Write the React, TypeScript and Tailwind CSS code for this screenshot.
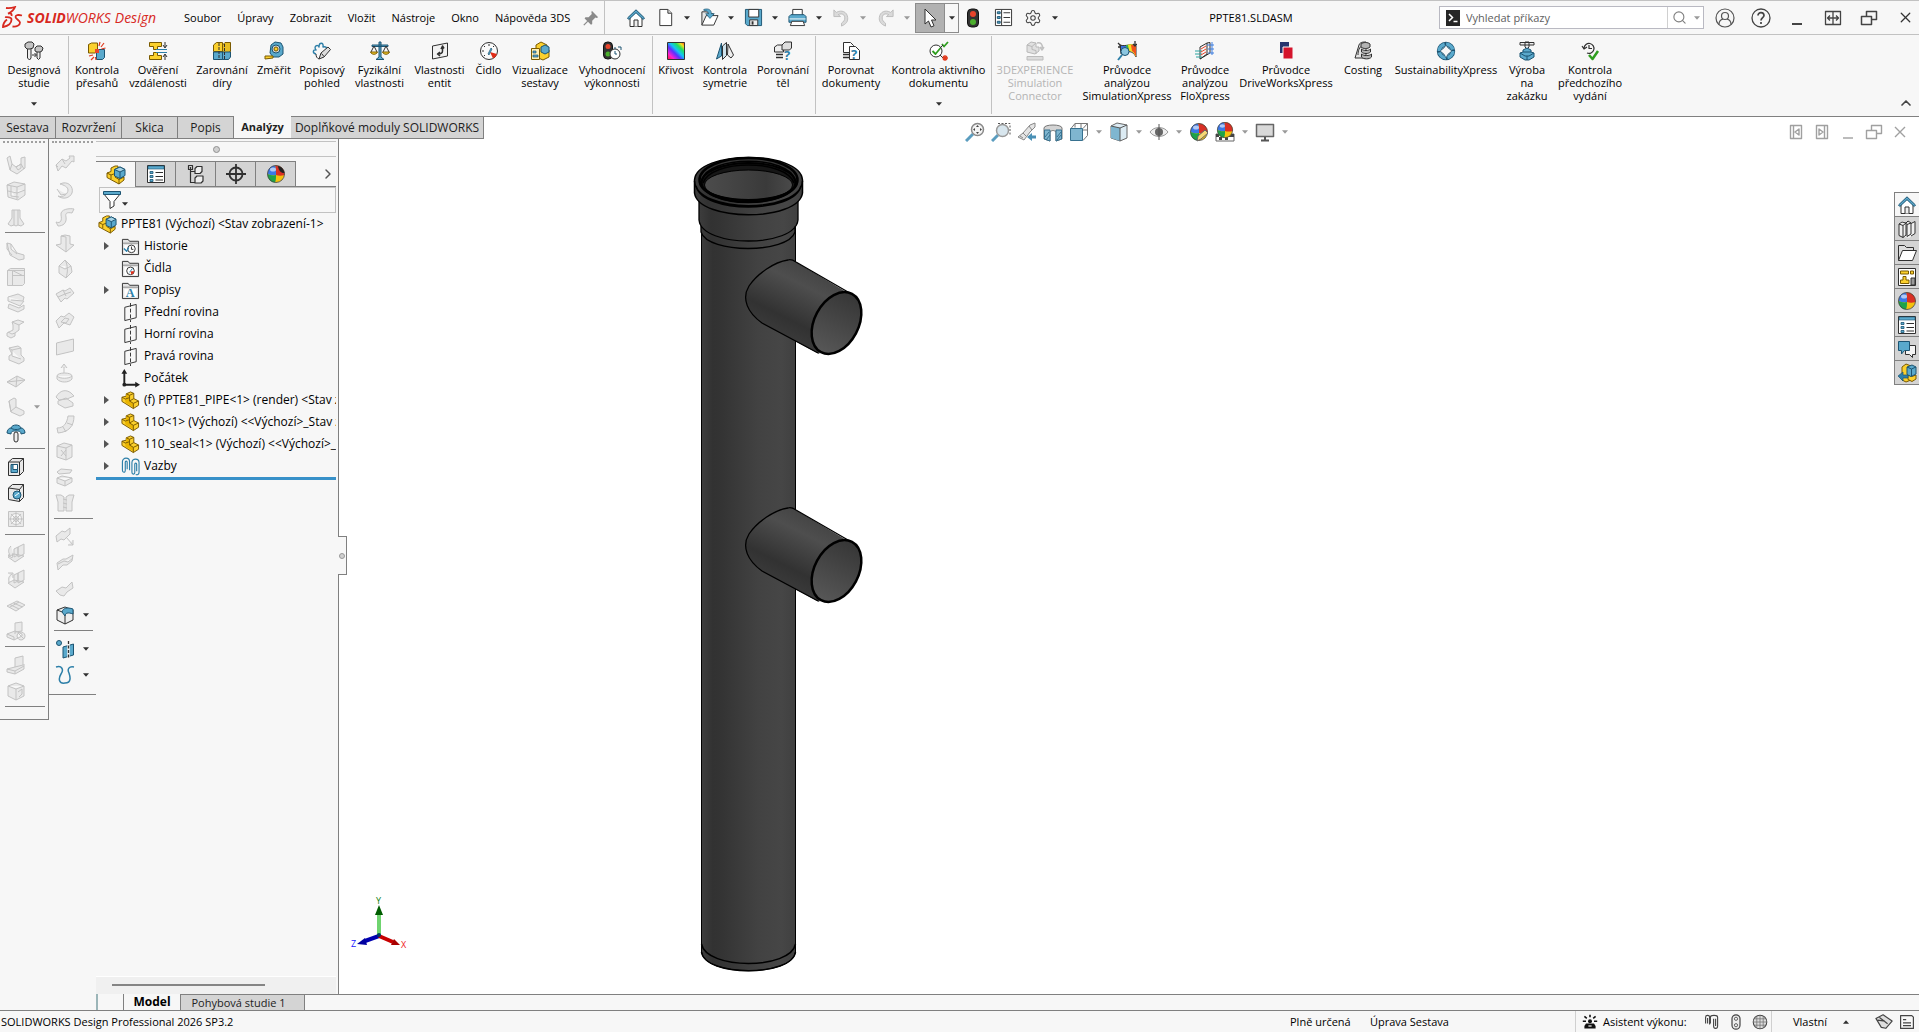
import React from 'react';
import { Search, ChevronRight, ChevronUp, X, Settings } from 'lucide-react';

type IconProps = { children: React.ReactNode; size?: number };

const Icon: React.FC<IconProps> = ({ children, size = 20 }) => (
  <svg width={size} height={size} viewBox="0 0 20 20" fill="none" strokeLinejoin="round" aria-hidden="true">
    {children}
  </svg>
);

const INK = '#303030';
const BLUE = '#5aa9cc';
const NAVY = '#1c5472';
const GOLD = '#fbd02d';
const OCHRE = '#7a5a00';

const Caret: React.FC<{ dim?: boolean; up?: boolean }> = ({ dim, up }) => (
  <svg width="6" height="4" viewBox="0 0 7 4" aria-hidden="true">
    <path d={up ? 'M3.500 0L7 4H0z' : 'M0 0h7L3.500 4z'} fill={dim ? '#9a9a9a' : '#303030'} />
  </svg>
);

/* ---------- shared glyphs ---------- */

const home = (
  <>
    <path d="M4 9v9.500h12V9l-6-5.500z" fill="#fff" stroke={INK} />
    <path d="M8 18.500v-6.500h4v6.500" fill="#eee" stroke={INK} />
    <path d="M1.500 10L10 1.800 18.500 10l-1.300 1.500L10 4.700 2.800 11.500z" fill={BLUE} stroke={NAVY} />
  </>
);

const part = (
  <>
    <path d="M1 6.500l4.500-1V3L10 1l3.500 1.500V8l5 2.500V15L13 18.500 1 11z" fill={GOLD} stroke={OCHRE} />
    <path d="M1 6.500l3.500 2 0 3.500 8.500 5V13L9 10.500V4.500L5.500 3v2.500L4.500 8.500z" fill="#e9b400" />
    <path d="M5.500 3L9 4.500l4.500-2M9 4.500v6l4 2.500 5.500-2.500M13 13v5.500M9 10.500L13.500 8M1 6.500l3.500 2L9 7" stroke={OCHRE} />
  </>
);

const assembly = (
  <>
    <path d="M1 8l4-1.500V3l4-2h3v9l6 2v3l-5 4L1 12.500z" fill={GOLD} stroke={OCHRE} />
    <path d="M1 8l4 2v4M5 10l4-1.500M13 14v5M9 12l4 2.500 5-2.500" stroke={OCHRE} />
    <path d="M8.500 4.500L14 2l5 2.500v6L14 13.500l-5.500-2.500z" fill={BLUE} stroke={NAVY} />
    <path d="M8.500 4.500L14 7l5-2.500L14 2z" fill="#a5d3e6" stroke={NAVY} />
    <path d="M14 7v6.500" stroke={NAVY} />
  </>
);

const propertyList = (
  <>
    <rect x="1.500" y="1.500" width="17" height="17" fill="#fff" stroke={INK} />
    <rect x="2" y="2" width="16" height="3" fill={BLUE} stroke={NAVY} strokeWidth=".6" />
    <path d="M4 7.500h3v2H4zM4 11.500h3v2H4zM4 15.500h3v2H4z" fill={BLUE} stroke={NAVY} strokeWidth=".8" />
    <path d="M9.500 8.500H17M9.500 12.500H17M9.500 16H17" stroke={INK} />
  </>
);

const appearance = (
  <>
    <circle cx="10" cy="10" r="8.500" fill="#f4c20d" />
    <path d="M10 11c0-4 0-7-1-9.500 6-.5 10 4 9.500 9.500-3 1-6 1-8.500 0z" fill="#d93025" />
    <path d="M10 11c-3 1-6 0-8.500-1C1.500 5 5 1.500 9 1.500 10 4 10 7 10 11z" fill="#3b78e7" />
    <path d="M10 11c0 3 0 5-1 7.500C5 18.500 1.500 15 1.500 10c2.500 1 5.500 2 8.500 1z" fill="#1ea34a" />
    <circle cx="10" cy="10" r="8.500" stroke="#444" strokeWidth=".8" />
    <ellipse cx="7" cy="5.500" rx="3" ry="2" fill="#fff" opacity=".6" />
  </>
);

const question = (x: number, y: number) => (
  <text x={x} y={y} fontFamily="Open Sans, sans-serif" fontSize="13" fontWeight="700" fill="#2d7fa8">?</text>
);

/* ---------- title bar ---------- */

const menus = ['Soubor', 'Úpravy', 'Zobrazit', 'Vložit', 'Nástroje', 'Okno', 'Nápověda 3DS'];

const quickTools = [
  {
    label: 'Nový',
    art: (
      <>
        <path d="M4 1.500h8.500l4 4v13H4z" fill="#fff" stroke={INK} />
        <path d="M12.500 1.500v4h4" fill="#ddd" stroke={INK} />
      </>
    ),
  },
  {
    label: 'Otevřít',
    art: (
      <>
        <path d="M2 18V4h5l1.500 2H14v3" fill="#e6e6e6" stroke={INK} />
        <path d="M2 18l4.500-10H19l-4.500 10z" fill="#fff" stroke={INK} />
        <path d="M4 1.500c5-1.500 8 .5 8 4.500h3l-4.500 5L6 6h3c0-2-1.500-3.500-5-3.500z" fill={BLUE} stroke={NAVY} strokeWidth=".7" />
      </>
    ),
  },
  {
    label: 'Uložit',
    art: (
      <>
        <path d="M1.500 1.500h17v17h-15l-2-2z" fill={BLUE} stroke={NAVY} />
        <path d="M5 1.500h10.500v8H5z" fill="#fff" stroke={INK} />
        <path d="M6 12.500h8.500v6H6z" fill="#eee" stroke={INK} />
        <path d="M8 14h2v3.500H8z" fill={INK} />
      </>
    ),
  },
  {
    label: 'Tisk',
    art: (
      <>
        <path d="M5 8V1.500h10V8" fill="#fff" stroke={INK} />
        <path d="M1 9l2-2h14l2 2v6H1z" fill={BLUE} stroke={NAVY} />
        <path d="M1.500 11.500h17" stroke="#fff" />
        <path d="M4 14h12l1.500 4.500h-15z" fill="#fff" stroke={INK} />
      </>
    ),
  },
  { label: 'Zpět', dim: true, art: <path d="M2 2v7h7L6.500 7c4-2 7 0 7 3.500 0 2.500-1.500 4-3.500 5.500v3c5-2 7-5 6.500-9C16 4 10 1.500 4.500 4.700z" fill="#dadada" stroke="#bdbdbd" /> },
  { label: 'Znovu', dim: true, art: <path d="M18 2v7h-7l2.500-2c-4-2-7 0-7 3.500 0 2.500 1.500 4 3.500 5.500v3c-5-2-7-5-6.500-9C4 4 10 1.500 15.500 4.700z" fill="#dadada" stroke="#bdbdbd" /> },
];

const TitleBar: React.FC = () => (
  <header className="flex h-[35px] shrink-0 items-center border-b border-t border-[#c2c2c2]">
    <div className="flex w-44 shrink-0 items-center pl-[2px] text-[#d8291f]">
      <svg width="21" height="24" viewBox="0 0 21 24" fill="none" stroke="#d8291f" strokeWidth="1.800" aria-hidden="true">
        <path d="M4 2c2 .3 5 .3 9-1-1 3-3.500 5-7 6.500 3-.5 4 .5 3.500 2.500" />
        <path d="M3 11c2 .5 6.500-.5 6.500 2.500 0 4-3.500 6.500-8.500 7.500 0-2.500 1.500-5.500 4-7.500" />
        <path d="M20 9.500c-4-1-6.500-.5-6.500 1.500s4.500 3.500 4.500 5.500c0 3-3.500 4.500-7.500 4" />
      </svg>
      <span className="pl-1 text-sm italic leading-5"><b>SOLID</b>WORKS</span>
      <span className="pl-1 text-sm italic leading-5">Design</span>
    </div>
    <nav className="flex w-[402px] shrink-0">
      {menus.map((m) => (
        <button key={m} className="whitespace-nowrap px-2">{m}</button>
      ))}
    </nav>
    <button aria-label="Připnout" className="flex h-full w-[27px] shrink-0 items-center justify-center border-r border-[#c2c2c2]">
      <Icon size={16}>
        <path d="M11 1l8 8-2 1-1.500-.5-4 4 0 4-1.500 1L2 10.500 3 9h4l4-4-.5-2z" fill="#8a8a8a" />
        <path d="M6 14l-5 5" stroke="#8a8a8a" strokeWidth="1.500" />
      </Icon>
    </button>
    <div className="flex h-full shrink-0 items-center pl-4">
      <button aria-label="Domů" className="flex w-[30px] justify-center"><Icon>{home}</Icon></button>
      {quickTools.map((t) => (
        <div key={t.label} className="flex items-center">
          <button aria-label={t.label} className="flex w-7 justify-center"><Icon size={19}>{t.art}</Icon></button>
          <button aria-label={`${t.label} – možnosti`} className="flex w-4 justify-center"><Caret dim={t.dim} /></button>
        </div>
      ))}
      <div className="flex h-[30px] border border-[#8c8c8c]">
        <button aria-label="Vybrat" className="flex w-[29px] items-center justify-center border-r border-[#8c8c8c] bg-[#b1b1b1]">
          <Icon>
            <path d="M5 1v15l3.500-3 2.500 6 3-1.200-2.500-5.800H16z" fill="#fff" stroke={INK} />
          </Icon>
        </button>
        <button aria-label="Vybrat – možnosti" className="flex w-[13px] items-center justify-center"><Caret /></button>
      </div>
      <button aria-label="Přestavět" className="flex w-7 justify-center">
        <Icon>
          <rect x="4.500" y="1" width="11" height="18" rx="4" fill="#333" stroke="#111" />
          <circle cx="10" cy="6" r="3" fill="#e8452c" />
          <circle cx="10" cy="14" r="3" fill="#4caf2d" />
        </Icon>
      </button>
      <button aria-label="Vlastnosti souboru" className="flex w-8 justify-center">
        <Icon size={19}>
          <rect x="1.500" y="1.500" width="17" height="17" fill="#fff" stroke={INK} />
          <path d="M8 2v16" stroke={INK} />
          <path d="M3.500 4h3v2h-3zM3.500 9h3v2h-3zM3.500 14h3v2h-3z" fill={BLUE} stroke={NAVY} />
          <path d="M10 5h7M10 10h7M10 15h7" stroke={INK} />
        </Icon>
      </button>
      <button aria-label="Možnosti" className="flex w-7 justify-center"><Settings size={18} strokeWidth={1.400} color="#444" /></button>
      <button aria-label="Možnosti – nabídka" className="flex w-4 justify-center"><Caret /></button>
    </div>
    <h1 className="flex-1 text-center">PPTE81.SLDASM</h1>
    <div className="flex h-[23px] w-[265px] shrink-0 items-center border border-[#b9b9c2] bg-white">
      <span className="ml-[6px] flex h-4 w-[14px] items-center justify-center bg-[#262626]">
        <svg width="10" height="10" viewBox="0 0 10 10" fill="none" stroke="#fff" strokeWidth="1.500" aria-hidden="true">
          <path d="M1 1l3.500 3.500L1 8M5.500 8.500h4" />
        </svg>
      </span>
      <input
        aria-label="Vyhledat příkazy"
        placeholder="Vyhledat příkazy"
        className="h-full min-w-0 flex-1 px-[6px] outline-none placeholder:text-[#606060]"
      />
      <button aria-label="Hledat" className="flex h-full w-[23px] items-center justify-center border-l border-[#d0d0d0]">
        <Search size={15} strokeWidth={1.800} color="#808080" />
      </button>
      <button aria-label="Rozsah hledání" className="flex w-[13px] justify-center"><Caret dim /></button>
    </div>
    <div className="ml-[3px] flex shrink-0 items-center">
      <button aria-label="Přihlášení" className="flex w-9 justify-center">
        <Icon>
          <circle cx="10" cy="10" r="9" stroke="#555" strokeWidth="1.200" />
          <circle cx="10" cy="8" r="3.500" stroke="#555" strokeWidth="1.200" />
          <path d="M4 16.500c0-3.500 2-5 4-5.500M16 16.500c0-3.500-2-5-4-5.500" stroke="#555" strokeWidth="1.200" />
        </Icon>
      </button>
      <button aria-label="Nápověda" className="flex w-9 justify-center">
        <Icon>
          <circle cx="10" cy="10" r="9" stroke="#444" strokeWidth="1.300" />
          <path d="M7 7.500C7 3.500 13 3.800 13 7.500c0 2-3 2.500-3 5M10 14v2" stroke="#444" strokeWidth="1.700" />
        </Icon>
      </button>
      <button aria-label="Minimalizovat" className="flex w-9 justify-center">
        <Icon><path d="M5 16h10" stroke="#444" strokeWidth="2" /></Icon>
      </button>
      <button aria-label="Rozdělit" className="flex w-9 justify-center">
        <Icon><path d="M2.500 3.500h15v13h-15zM10 3.500v13M4.500 10h11M7 7.500L4.500 10 7 12.500M13 7.500l2.500 2.500-2.500 2.500" stroke="#444" strokeWidth="1.300" /></Icon>
      </button>
      <button aria-label="Obnovit" className="flex w-9 justify-center">
        <Icon><path d="M2.500 8.500h10v8h-10zM7.500 8.500v-5h10v8h-5" stroke="#444" strokeWidth="1.500" /></Icon>
      </button>
      <button aria-label="Zavřít" className="flex w-8 justify-center pl-1"><X size={17} strokeWidth={1.800} color="#333" /></button>
    </div>
  </header>
);

/* ---------- ribbon ---------- */

type Tool = { lines: string[]; w: string; art: React.ReactNode; menu?: boolean; sep?: boolean; off?: boolean };

const ribbon: Tool[] = [
  {
    lines: ['Designová', 'studie'], w: 'w-[69px]', menu: true, sep: true,
    art: (
      <>
        <path d="M3.500 8v9l2 2 1.500-2V8M13 11v6l1.500 1.500 1.500-1.500v-6" fill="#eee" stroke={INK} />
        <path d="M1 3l3-2h4l2 2-1 4-3 1H3L1 6zM11 7l2-2h4l2 2-1 3-2 1h-3l-2-1z" fill="#c4c4c4" stroke={INK} />
        <path d="M8 14h4M10.500 12l2 2-2 2" stroke={INK} />
      </>
    ),
  },
  {
    lines: ['Kontrola', 'přesahů'], w: 'w-[56px]',
    art: (
      <>
        <path d="M1.500 3.500l3-1.500h6v8l-2 2h-7z" fill={GOLD} stroke={OCHRE} />
        <path d="M9.500 10.500l2-2h6v8l-2 2h-6z" fill={BLUE} stroke={NAVY} />
        <path d="M8 8h4v4H8z" fill="#e8452c" />
        <path d="M12 5l1-4M14 6l3-4M14.500 8l4-1M6 14l-4 1M7 16l-3 3M9 19l-.5-3" stroke="#e03a1e" strokeWidth="1.200" />
      </>
    ),
  },
  {
    lines: ['Ověření', 'vzdálenosti'], w: 'w-[66px]',
    art: (
      <>
        <path d="M1.500 1.500h12v4h-4v3h-4v-3h-4zM1.500 18.500h12v-4h-4v-3h-4v3h-4z" fill={GOLD} stroke={OCHRE} />
        <path d="M8 8.500h11M8 11.500h11" stroke="#2d7fa8" />
        <path d="M17 1v5M17 19v-5M15 4l2 3 2-3M15 16l2-3 2 3" stroke={INK} />
      </>
    ),
  },
  {
    lines: ['Zarovnání', 'díry'], w: 'w-[62px]',
    art: (
      <>
        <path d="M1.500 4l3-2.500h6v9h-9z" fill={GOLD} stroke={OCHRE} />
        <path d="M10.500 4l2.500-2.500h5.500v9l-2 1h-6z" fill="#e8bd20" stroke={OCHRE} />
        <path d="M1.500 11h9v7.500h-9zM10.500 11h8v5l-2 2.500h-6z" fill={BLUE} stroke={NAVY} />
        <path d="M7 2v17M12.500 3v15" stroke={INK} strokeDasharray="3 1" />
      </>
    ),
  },
  {
    lines: ['Změřit'], w: 'w-[42px]',
    art: (
      <>
        <path d="M7 4l4-3 6 1 2 4v7l-4 3H9L6 12z" fill={BLUE} stroke={NAVY} />
        <circle cx="12" cy="8" r="4" fill="#d6d6d6" stroke={NAVY} />
        <circle cx="12" cy="8" r="2" fill={GOLD} stroke={OCHRE} />
        <path d="M1 18v-3h8v2z" fill={GOLD} stroke={OCHRE} />
      </>
    ),
  },
  {
    lines: ['Popisový', 'pohled'], w: 'w-[54px]',
    art: (
      <>
        <path d="M4 13c-4-1-3-5 0-4-3-4 2-6 3-3 0-5 5-5 4 0 4-1 5 2 2 4" stroke="#2d7fa8" strokeWidth="1.400" />
        <path d="M7 18l2-6 7-6 2.500 2.500L12 16z" fill="#ddd" stroke={INK} />
        <path d="M9.500 12.500l2.500 3M4 13c0 3 1 4 3 5" stroke={INK} />
      </>
    ),
  },
  {
    lines: ['Fyzikální', 'vlastnosti'], w: 'w-[61px]',
    art: (
      <>
        <path d="M9 1h2v15l3 2.500H6L9 16zM2 4h16v1.500H2z" fill={BLUE} stroke={NAVY} />
        <path d="M4 5L1 11M4 5l3 6M16 5l-3 6M16 5l3 6" stroke={INK} />
        <path d="M.5 11h7c-1 3-6 3-7 0zM12.500 11h7c-1 3-6 3-7 0z" fill={GOLD} stroke={OCHRE} />
      </>
    ),
  },
  {
    lines: ['Vlastnosti', 'entit'], w: 'w-[59px]',
    art: (
      <>
        <path d="M2.500 5l15-3v13l-15 3z" fill="#f2f2f2" stroke={INK} />
        <path d="M12.500 6v4c0 2-2 3-4.500 3M14 7.500L12.500 5 11 8M10 11l-2.500 2 2.500 2" stroke={INK} strokeWidth="1.500" />
      </>
    ),
  },
  {
    lines: ['Čidlo'], w: 'w-[39px]',
    art: (
      <>
        <circle cx="10" cy="10" r="8.500" fill="#fafafa" stroke={INK} />
        <path d="M10 3v2M5 5l1 1M3 10h2M5 15l1-1M15 5l-1 1" stroke={INK} />
        <path d="M11 11l7 2a8 8 0 0 1-4 4.500z" fill="#e02b16" />
        <path d="M9 13l3-6 1 1-3 6z" fill={BLUE} stroke={NAVY} strokeWidth=".7" />
      </>
    ),
  },
  {
    lines: ['Vizualizace', 'sestavy'], w: 'w-[64px]',
    art: (
      <>
        <path d="M6 4l5-3 6 3v4l2 1v7l-6 3-7-3z" fill={GOLD} stroke={OCHRE} />
        <path d="M11 6l4-2 4 2v5l-4 2-4-2z" fill={BLUE} stroke={NAVY} />
        <path d="M1.500 7.500h8v11h-8z" fill="#fff2b8" stroke={OCHRE} />
        <path d="M3 10h3v2H3zM3 14h5v2H3z" fill={BLUE} stroke={NAVY} strokeWidth=".7" />
      </>
    ),
  },
  {
    lines: ['Vyhodnocení', 'výkonnosti'], w: 'w-[81px]', sep: true,
    art: (
      <>
        <rect x="1.500" y="1" width="9" height="17" rx="4" fill="#333" stroke="#111" />
        <circle cx="6" cy="5.500" r="2.500" fill="#e8452c" />
        <circle cx="6" cy="13" r="2.500" fill="#4caf2d" />
        <circle cx="13" cy="13" r="5" fill="#fff" stroke={INK} />
        <path d="M13 10v3h2M12 7h2M16 6h3v3" stroke={NAVY} />
      </>
    ),
  },
  {
    lines: ['Křivost'], w: 'w-[46px]',
    art: (
      <>
        <rect x="1.500" y="1.500" width="17" height="17" fill="url(#curvature)" stroke={INK} />
        <defs>
          <linearGradient id="curvature" x1="0" y1="1" x2="1" y2="0">
            <stop offset="0" stopColor="#ff1e2a" />
            <stop offset=".2" stopColor="#ff20d0" />
            <stop offset=".4" stopColor="#5a30ff" />
            <stop offset=".55" stopColor="#12c4f8" />
            <stop offset=".72" stopColor="#20e060" />
            <stop offset=".86" stopColor="#f6e020" />
            <stop offset="1" stopColor="#ff3020" />
          </linearGradient>
        </defs>
      </>
    ),
  },
  {
    lines: ['Kontrola', 'symetrie'], w: 'w-[52px]',
    art: (
      <>
        <path d="M1.500 18l5-16v13z" fill={BLUE} stroke={NAVY} />
        <path d="M7.500 5l4-3.500v13l-4 4z" fill="#cfe4ee" stroke={INK} />
        <path d="M13 3l5.500 11-2.500 3-3.500-3z" fill="#eee" stroke={INK} />
      </>
    ),
  },
  {
    lines: ['Porovnání', 'těl'], w: 'w-[65px]', sep: true,
    art: (
      <>
        <path d="M1.500 6l3-2h6v7h-9z" fill="#eee" stroke={INK} />
        <path d="M9 4l3-3h6.500v6l-2 2H9z" fill="#ddd" stroke={INK} />
        <path d="M3 13.500h7M3 16.500h7" stroke={INK} strokeWidth="1.500" />
        {question(11, 19)}
      </>
    ),
  },
  {
    lines: ['Porovnat', 'dokumenty'], w: 'w-[70px]',
    art: (
      <>
        <path d="M2.500 1.500h7l3 3v7h-10z" fill="#fff" stroke={INK} />
        <path d="M8.500 5.500h6l4 4v9h-10z" fill="#fff" stroke={INK} />
        <path d="M2 13.500h6M2 16.500h6" stroke={INK} strokeWidth="1.500" />
        {question(10, 18)}
      </>
    ),
  },
  {
    lines: ['Kontrola aktivního', 'dokumentu'], w: 'w-[106px]', menu: true, sep: true,
    art: (
      <>
        <circle cx="7" cy="10" r="6" fill="#fff" stroke={INK} />
        <path d="M3.500 10l3 3 5-6M13 3l2 2.500L19 1" stroke="#2f9e1f" strokeWidth="1.800" />
        <path d="M11 7l3-3M11 14l3 3" stroke={INK} />
        <path d="M14 15l4 4M18 15l-4 4M16 14v6M13.500 17H19" stroke="#e03a1e" strokeWidth="1.300" />
      </>
    ),
  },
  {
    lines: ['3DEXPERIENCE', 'Simulation', 'Connector'], w: 'w-[86px]', off: true,
    art: (
      <>
        <path d="M2 4l4-3 5 1v4h3v4l-4 3-8-2zM2 4l5 1.500v3l4 1V13M7 5.500l4-3.500" fill="#e0e0e0" stroke="#b8b8b8" />
        <path d="M12 2c4-1 6 2 5 5M15 6l2 3 2-3" stroke="#c0c0c0" strokeWidth="1.500" />
        <path d="M2 15.500h16v3.500H2z" fill="#dcdcdc" stroke="#bcbcbc" />
      </>
    ),
  },
  {
    lines: ['Průvodce', 'analýzou', 'SimulationXpress'], w: 'w-[98px]',
    art: (
      <>
        <path d="M3 4c6 2 10-2 16 1v11c-2-4-5-6-8-5l-7 2z" fill="#3b6fe0" stroke={INK} />
        <path d="M10 4c3-1 6-1 9 1v11c-2-4-4-6-7-6z" fill="#f6e020" />
        <path d="M14 4c2 0 4 0 5 1v11c-1-3-2-5-4-6z" fill="#f0521c" />
        <path d="M9 4l2 0 1 5-2 0z" fill="#36b24a" />
        <circle cx="8" cy="10.500" r="4" fill="#8cc6e0" stroke={NAVY} />
        <path d="M5 14l-4 5" stroke="#2d7fa8" strokeWidth="2" />
        <path d="M1 2l3 3M1 6h3M18 0v4M16 3l2 2 2-2" stroke={INK} strokeWidth="1.300" />
      </>
    ),
  },
  {
    lines: ['Průvodce', 'analýzou', 'FloXpress'], w: 'w-[58px]',
    art: (
      <>
        <path d="M5 6l7-4v11l-7 5z" fill="#f4f4f4" stroke={INK} />
        <path d="M12 2l3-.5v10.500L5 18" stroke={INK} />
        <path d="M0 10h7M0 13h7M1 16h6" stroke="#2aa3a0" />
        <path d="M12 4h7M13 8h6M13 12h6M17 1v13" stroke="#3f7fe0" />
        <path d="M6 8l5-3M6 11l5-3M6 14l5-3" stroke="#e8452c" />
      </>
    ),
  },
  {
    lines: ['Průvodce', 'DriveWorksXpress'], w: 'w-[104px]',
    art: (
      <>
        <path d="M4 1h9v11H4z" fill="#27346e" />
        <path d="M7 6h10v12H7z" fill="#d4142c" stroke="#f7f7f7" />
      </>
    ),
  },
  {
    lines: ['Costing'], w: 'w-[50px]',
    art: (
      <>
        <path d="M2 17L6 4c1-3 4-3 7-3v16z" fill="#e4e4e4" stroke={INK} />
        <path d="M5 14c0-4 1-8 5-10" stroke={INK} />
        <path d="M8 3c2-2 7-2 9 0v3c-2 2-7 2-9 0zM8.500 8c2 2 7 2 9 0v3c-2 2-7 2-9 0zM8.500 13c2 2 8 2 10 0v3c-2 2.500-8 2.500-10 0z" fill="#b4b4b4" stroke={INK} />
      </>
    ),
  },
  {
    lines: ['SustainabilityXpress'], w: 'w-[116px]',
    art: (
      <>
        <circle cx="10" cy="10" r="6.700" stroke={NAVY} strokeWidth="5" />
        <circle cx="10" cy="10" r="6.700" stroke={BLUE} strokeWidth="3.500" strokeDasharray="9 1.500" />
        <path d="M10 4l2 3 4 3-4 3-2 4-2-4-4-3 4-3z" fill="#f7f7f7" stroke={NAVY} strokeWidth=".7" />
      </>
    ),
  },
  {
    lines: ['Výroba', 'na', 'zakázku'], w: 'w-[46px]',
    art: (
      <>
        <path d="M3 1.500h14v2.500H3zM8 1h4v5l-2 2-2-2z" fill="#eee" stroke={INK} />
        <path d="M6 9l4-2 4 2v3H6z" fill={BLUE} stroke={NAVY} />
        <path d="M3 12l3-1h8l3 1v4l-5 3H8l-5-3z" fill={BLUE} stroke={NAVY} />
        <path d="M3 12l5 3h4l5-3M10 15v4" stroke={NAVY} />
      </>
    ),
  },
  {
    lines: ['Kontrola', 'předchozího', 'vydání'], w: 'w-[80px]',
    art: (
      <>
        <path d="M4 7a5 5 0 1 1 3 5M2 5l2 3 3-2M9 4v3.500h3" stroke={INK} strokeWidth="1.200" />
        <path d="M9 14l3.500 4L18 10" stroke="#2f9e1f" strokeWidth="2.500" />
      </>
    ),
  },
];

const Ribbon: React.FC = () => (
  <section className="flex h-[82px] shrink-0 items-stretch border-b border-[#808080] pb-[2px] pt-[1px]">
    {ribbon.map((t) => (
      <button
        key={t.lines.join(' ')}
        disabled={t.off}
        className={`${t.w} flex shrink-0 flex-col items-center pt-[5px] leading-[13px] ${t.sep ? 'border-r border-[#c2c2c2]' : ''} ${t.off ? 'text-[#b4b4b4]' : ''}`}
      >
        <Icon>{t.art}</Icon>
        <span className="mt-[2px] whitespace-pre text-center">{t.lines.join('\n')}</span>
        {t.menu && <span className="mb-2 mt-auto"><Caret /></span>}
      </button>
    ))}
    <button aria-label="Sbalit" className="ml-auto flex items-end pb-[3px] pr-[5px]"><ChevronUp size={16} strokeWidth={2.500} color="#444" /></button>
  </section>
);

const commandTabs = [
  { label: 'Sestava', w: 'w-[56px]' },
  { label: 'Rozvržení', w: 'w-[66px]' },
  { label: 'Skica', w: 'w-[56px]' },
  { label: 'Popis', w: 'w-[56px]' },
  { label: 'Analýzy', w: 'w-[57px]', active: true },
  { label: 'Doplňkové moduly SOLIDWORKS', w: 'w-[193px]' },
];

const CommandTabs: React.FC = () => (
  <div className="-mt-px flex h-[23px] shrink-0 text-xs">
    {commandTabs.map((t) => (
      <button
        key={t.label}
        className={`${t.w} shrink-0 whitespace-nowrap border-b border-[#808080] text-[#222] ${
          t.active ? 'bg-[#f7f7f7] text-[11px] font-bold' : 'border-r border-t bg-[#d4d4d4]'
        }`}
      >
        {t.label}
      </button>
    ))}
    <div className="mt-px flex-1 bg-white" />
  </div>
);

/* ---------- feature toolbars ---------- */

const ghost = (d: string) => <path d={d} fill="#e9e9e9" stroke="#c3c3c3" />;

type Feature = { name: string; art: React.ReactNode; menu?: 'on' | 'dim' } | 'sep';

const g = (name: string, d: string, menu?: 'on' | 'dim'): Feature => ({ name, art: ghost(d), menu });

const sheetMetal: Feature[] = [
  g('Převést na plech', 'M1 3l3-2 2 8 4 3 5-3V3l4-1v11l-8 6-7-4zM6 9l-2 6M15 9l3 5M10 12l5-3 0 4-3 2z'),
  g('Skořepina plechu', 'M1 4l7-3 11 2v11l-7 5-10-3zM1 4l10 2v12M2 10l9 2 8-3M11 6l8-3M5 5v10l8 1'),
  g('Přechodový ohyb', 'M6 3h8v8l4 6-3 2-3-1-2 1-2-1-3 1-3-2 4-6zM8 3v15M12 3v15'),
  'sep',
  g('Lem hrany', 'M1 2l4 1 6 9 7 2v4l-5 1-9-5zM1 2v6l5 6M5 3v5l6 5'),
  g('Plech', 'M1.500 3.500l3-2h14v15l-2 2h-15zM1.500 3.500h5v15M6.500 8.500h12M6.500 3.500l12 0M6.500 3.500l10 5'),
  g('Lem', 'M2 4l10-3 6 3-1 4-12-1M2 4v4l12 5 4-5M3 11l10 4 5-3v4l-6 3-10-4z'),
  g('Jog', 'M6 3l6-2 6 2-5 3v5l-4 3v3l-4 2-4-2v-3l6-3V6zM6 3l7 3M2 13l4 2 3-1'),
  g('Skicovaný ohyb', 'M3 3l9-2 3 2v7l3 3v3l-5 3-10-4v-4l3-2zM3 3l3 2v6l9 3M6 5l9-2'),
  g('Křížový zlom', 'M1 11l10-6 8 4-9 7zM1 11l18-2M11 5l-1 11'),
  g('Roh', 'M3 4l5-3 2 1v8l8 4v3l-4 2-9-4zM3 4l2 11M5 14l5-4', 'dim'),
  {
    name: 'Tvářecí nástroj',
    art: (
      <>
        <path d="M1 10c0-3 2-5 4-5 1-4 9-4 10 0 2 0 4 2 4 5l-4 1c0-3-2-3-5-3s-5 0-5 3z" fill={BLUE} stroke={NAVY} />
        <path d="M5 5c2 2 8 2 10 0" stroke={NAVY} />
        <rect x="8" y="9" width="4" height="10" rx="2" fill="#eee" stroke={INK} />
      </>
    ),
  },
  'sep',
  {
    name: 'Vyříznout',
    art: (
      <>
        <path d="M2.500 5l4-3.500h11v13l-4 4h-11z" fill="#e8e8e8" stroke={INK} />
        <path d="M2.500 5h11v13M13.500 5l4-3.500" stroke={INK} />
        <path d="M5 7.500h6.500v8H5z" fill={BLUE} stroke={NAVY} />
        <path d="M7 7.500h4.500v5H7z" fill="#fff" stroke={NAVY} />
      </>
    ),
  },
  {
    name: 'Jednoduchá díra',
    art: (
      <>
        <path d="M2.500 5l4-3.500h11v13l-4 4-11-2z" fill="#e8e8e8" stroke={INK} />
        <path d="M2.500 5l11 1.500v12M13.500 6.500l4-5" stroke={INK} />
        <circle cx="11" cy="12" r="4" fill={BLUE} stroke={NAVY} />
        <path d="M9 13l4-3" stroke="#fff" />
      </>
    ),
  },
  g('Větrání', 'M2.500 2.500h15v15h-15zM10 2.500v15M2.500 10h15M10 4.500a5.500 5.500 0 1 0 .1 0M10 7.500a2.500 2.500 0 1 0 .1 0M5 5l10 10M15 5L5 15'),
  'sep',
  g('Rozvinout', 'M8 6l4-2v8l-4 2zM12 4l6-3v10l-6 3zM2 14l6-3 10 2-9 6zM5 3c-3 3-3 6-1 9l-2 0 4 3 1-5'),
  g('Svinout', 'M8 6l4-2v8l-4 2zM12 4l6-3v10l-6 3zM2 14l6-3 10 2-9 6zM2 4h5v5M6 5c-3 2-4 4-3 8'),
  g('Rozložit', 'M1 11l10-5 8 4-9 6zM4 9.500l9 4.500M7.500 8l9 4M13 7l-9 5'),
  g('Bez ohybů', 'M9 2l7-1v9l-7 1zM1 13l8-3 7 3v2l-8 4-7-3zM1 13l7 3v3M9 11v2M15 11a4 4 0 1 0 .1 0M12 12l6 6'),
  'sep',
  g('Záložka a drážka', 'M9 3l8-2v9l-8 2zM9 12l-8 2v3l8 2 9-5v-5M1 14l8 2 9-5M9 16v3'),
  g('Převést', 'M2 5l8-3 8 3v10l-8 4-8-4zM2 5l8 3 8-3M10 8v11M12 11l4-3v5l-3 3'),
  'sep',
];

const surfaces: Feature[] = [
  g('Vysunutý povrch', 'M1 10l6-6 4 2 4-3-1-2h5v6l-2-1-6 7-4-2-4 5zM1 10l2 2M7 4l3 5'),
  g('Rotovaný povrch', 'M5 3c8-4 14 3 12 9-2 5-9 7-14 3 5 2 10-2 10-6 0-3-4-5-8-6zM2 8l4 6 5-1'),
  g('Tažený povrch', 'M1 15c5 2 6-2 5-7-1-6 9-7 13-6l-2 4c-5-1-7 0-6 4 1 6-3 9-8 9z'),
  g('Spojený povrch', 'M6 3l4-1 5 1v8l4 1-8 7-10-7 5-1zM6 3l5 1v15'),
  g('Hraniční povrch', 'M10 1l6 6 1 6-6 6-7-5 0-7zM10 1c3 5 3 12 1 18M4 7l6 3 6-3'),
  g('Vyplněný povrch', 'M1 9l7-4 2 1 5-3 4 5-7 6-2-1-4 4zM8 5l3 6M3 12l7-3 6-2'),
  g('Volný tvar', 'M1 10l5-5 3 1 5-4 5 4-4 8-6-2-5 5zM6 11l4-4 4 1-3 4z'),
  g('Rovinný povrch', 'M1.500 6l17-4v12l-17 4z'),
  g('Offset', 'M2 13c0-4 15-4 15 0v3c-3 4-12 4-15 0zM2 13c3 3 12 3 15 0M9 10V4M6 5l3-4 3 4'),
  g('Pravítkový povrch', 'M1 8c4-7 10-8 15-4l3 3-7 3-8 1zM3 12l8-3 7 5v3l-8 2-7-4z'),
  g('Rozšířit', 'M13 1h6c0 10-5 16-16 17l-1-5c7 0 10-5 11-12zM12 8l6 2M8 12l3 5'),
  g('Smazat plochu', 'M2 5l7-3 8 2v12l-6 3-9-3zM2 5l9 2v12M11 7l6-3M6 9l5 6M11 9l-5 6'),
  g('Nahradit plochu', 'M2 5l4-3 11 1-2 3-11 1zM2 11l5-2 10 2v4l-7 4-8-3zM2 11l8 3 7-3M10 14v5'),
  g('Sešít', 'M1 2h5l3 2v14H3V9zM19 2h-5l-3 2v14h6V9zM8 6l4 1M8 10l4 1M8 14l4 1'),
  'sep',
  g('Prodloužit povrch', 'M1 9l6-5 3 1 5-4v6l-6 6-3-1-4 3zM11 10l7 8M18 13v5h-5'),
  g('Oříznout povrch', 'M2 10l6-4 3 0 7-4-1 6-5 4-4 0-5 5zM3 11l6-3 4 1 5-4'),
  g('Zrušit oříznutí', 'M1 12l6-4 4 1 6-6 1 6-6 4-3 4-4-1z'),
  {
    name: 'Zaoblení',
    menu: 'on',
    art: (
      <>
        <path d="M2 5l8-3 8 3v10l-8 4-8-4z" fill="#eee" stroke={INK} />
        <path d="M10 8v11M2 5l8 3" stroke={INK} />
        <path d="M7 7c1-4 5-5 11-3v5c-5-2-8-1-8 2z" fill={BLUE} stroke={NAVY} />
      </>
    ),
  },
  'sep',
  {
    name: 'Referenční geometrie',
    menu: 'on',
    art: (
      <>
        <circle cx="4" cy="4" r="2.500" fill={BLUE} stroke={NAVY} />
        <path d="M8 8l10.500-3v11L8 19z" fill={BLUE} stroke={NAVY} />
        <path d="M13.500 2v18" stroke="#f7f7f7" strokeWidth="2.500" />
        <path d="M13.500 2v18" stroke={INK} strokeDasharray="3 1.500" strokeWidth="1.300" />
      </>
    ),
  },
  {
    name: 'Křivky',
    menu: 'on',
    art: <path d="M1 2c6-2 8 3 5 7-3 5-2 10 4 9 7 0 5-7 4-10-2-4 0-7 5-6" stroke="#2d7fa8" strokeWidth="1.500" />,
  },
];

const FeatureColumn: React.FC<{ items: Feature[]; className: string }> = ({ items, className }) => (
  <div className={`flex shrink-0 flex-col border-[#808080] ${className}`}>
    <div className="h-[13px] shrink-0 px-[3px] pt-[2px]"><div className="border-t-2 border-dotted border-[#a0a0a0]" /></div>
    {items.map((f, i) =>
      f === 'sep' ? (
        <div key={i} className="h-2 shrink-0 pt-[2px]"><div className="ml-[5px] mr-[3px] border-t border-[#808080]" /></div>
      ) : (
        <div key={i} className="flex h-[26px] shrink-0 items-center pl-[6px]">
          <button aria-label={f.name}><Icon>{f.art}</Icon></button>
          {f.menu && <button aria-label={`${f.name} – nabídka`} className="ml-2"><Caret dim={f.menu === 'dim'} /></button>}
        </div>
      ),
    )}
  </div>
);

/* ---------- feature manager ---------- */

const managerTabs = [
  { name: 'Strom', art: assembly },
  { name: 'Vlastnosti', art: propertyList },
  {
    name: 'Konfigurace',
    art: (
      <>
        <path d="M4.500 3v15.500h5M4.500 7.500h5M2.500 1.500h4v4h-4z" stroke={INK} strokeWidth="1.200" />
        <path d="M9 4.500l2-2h5v5l-2 2H9zM9 14l2-2h6v5l-2 2H9z" fill="#eee" stroke={INK} strokeWidth="1.200" />
      </>
    ),
  },
  {
    name: 'DimXpert',
    art: (
      <>
        <circle cx="10" cy="10" r="6.500" stroke={INK} strokeWidth="1.800" />
        <path d="M10 0v20M0 10h20" stroke={INK} strokeWidth="1.800" />
      </>
    ),
  },
  { name: 'Zobrazení', art: <>{appearance}<path d="M12 2c4 1 6 4 6.500 7-3 .5-6-2-6.500-7z" fill="#222" /></> },
];

const folder = (inner: React.ReactNode) => (
  <>
    <path d="M1.500 18.500v-16h6l1.500 2h9.500v14z" fill="#e4e4e4" stroke={INK} />
    <path d="M2 6.500h16" stroke="#888" />
    <path d="M3.500 8.500h13v8.500h-13z" fill="#fff" />
    {inner}
  </>
);

const plane = (
  <>
    <path d="M4 4.500l12-3v14l-12 3z" stroke={INK} />
    <path d="M10 0v20" stroke={INK} strokeDasharray="4 2" />
  </>
);

const tree = [
  { text: 'Historie', open: true, art: folder(<><circle cx="11" cy="12.500" r="4" fill="#fff" stroke={INK} /><path d="M11 10v3h2" stroke={INK} /><path d="M3 12l3 3 2-4" stroke="#2d7fa8" strokeWidth="1.500" /></>) },
  { text: 'Čidla', art: folder(<><circle cx="10" cy="12.500" r="4" fill="#fff" stroke={INK} /><path d="M10 13l4 0a4 4 0 0 1-3 3.500z" fill="#e02b16" /><path d="M9 14l3-4" stroke="#2d7fa8" /></>) },
  { text: 'Popisy', open: true, art: folder(<text x="5" y="17" fontSize="13" fontWeight="700" fontFamily="Liberation Serif, serif" fill="#2d7fa8">A</text>) },
  { text: 'Přední rovina', art: plane },
  { text: 'Horní rovina', art: plane },
  { text: 'Pravá rovina', art: plane },
  { text: 'Počátek', art: <><path d="M3.500 3v13.500H17" stroke="#222" strokeWidth="2" /><path d="M3.500 0l3 5h-6zM20 16.500l-5 3v-6z" fill="#222" /><circle cx="3.500" cy="16.500" r="2" fill="#222" /></> },
  { text: '(f) PPTE81_PIPE<1> (render) <Stav zobrazení-1>', open: true, art: part },
  { text: '110<1> (Výchozí) <<Výchozí>_Stav zobrazení 1>', open: true, art: part },
  { text: '110_seal<1> (Výchozí) <<Výchozí>_Stav zobrazení 1>', open: true, art: part },
  { text: 'Vazby', open: true, art: <path d="M6.500 13V5.500c0-1.500-2-1.500-2 0V14c0 3-3 2.500-3 0V5c0-5 7.500-5 7.500 0v9M16.500 15V7.500c0-1.500-2-1.500-2 0V16c0 3-3 2.500-3 0V6c0-5 7.500-5 7.500 0v10c0 2.500-2 3-3.500 2.500" stroke="#2d7fa8" strokeWidth="1.200" /> },
];

const FeatureManager: React.FC = () => (
  <aside className="relative z-10 flex w-[243px] shrink-0 flex-col border-r border-[#808080] pr-[2px]">
    <div className="mt-[2px] flex h-4 shrink-0 items-center justify-center border-y border-[#c2c2c2]">
      <span className="h-[7px] w-[7px] rounded-full border border-[#909090] bg-[#d0d0d0]" />
    </div>
    <div className="mt-1 flex h-[26px] shrink-0">
      {managerTabs.map((t, i) => (
        <button
          key={t.name}
          aria-label={t.name}
          className={`flex w-10 items-center justify-center border-r border-t border-[#808080] ${i === 0 ? '' : 'border-b bg-[#d4d4d4]'}`}
        >
          <Icon>{t.art}</Icon>
        </button>
      ))}
      <button aria-label="Další karty" className="flex flex-1 items-center justify-end border-b border-[#808080]">
        <ChevronRight size={16} strokeWidth={2.200} color="#555" />
      </button>
    </div>
    <div className="ml-[3px] flex h-[26px] shrink-0 items-center border border-[#c2c2c2] pl-[2px]">
      <button aria-label="Filtr" className="flex items-center">
        <Icon>
          <path d="M1.500 3.500l6.500 8v7l4-2.500V11.500l6.500-8z" fill="#fff" stroke={INK} />
          <path d="M1.500 1.500h17v3h-17z" fill={BLUE} stroke={NAVY} />
        </Icon>
        <span className="pt-2"><Caret /></span>
      </button>
      <input aria-label="Filtr stromu" className="h-full min-w-0 flex-1 outline-none" />
    </div>
    <div className="overflow-hidden border-b-[3px] border-[#3891c9] text-xs">
      <div className="flex h-[22px] items-center whitespace-nowrap pl-[2px]">
        <Icon size={19}>{assembly}</Icon>
        <span className="pl-1">PPTE81 (Výchozí) &lt;Stav zobrazení-1&gt;</span>
      </div>
      <ul>
        {tree.map((n) => (
          <li key={n.text} className="flex h-[22px] items-center whitespace-nowrap pl-2">
            <span className="w-[17px] shrink-0">
              {n.open && (
                <button aria-label="Rozbalit" className="block">
                  <svg width="5" height="8" viewBox="0 0 5 8" aria-hidden="true"><path d="M0 0l5 4-5 4z" fill="#555" /></svg>
                </button>
              )}
            </span>
            <span className="shrink-0"><Icon size={19}>{n.art}</Icon></span>
            <span className="pl-1">{n.text}</span>
          </li>
        ))}
      </ul>
    </div>
    <div className="mt-auto h-[18px] border-t border-white bg-[#f0f0f0] pl-4 pt-[7px]">
      <div className="h-[2px] w-[153px] bg-[#858585]" />
    </div>
    <button aria-label="Skrýt panel" className="absolute -right-[9px] top-[397px] flex h-[39px] w-[9px] items-center justify-center border border-l-0 border-[#808080] bg-[#f7f7f7]">
      <span className="h-[6px] w-[6px] rounded-full border border-[#999] bg-[#d0d0d0]" />
    </button>
  </aside>
);

/* ---------- graphics area ---------- */

const Branch: React.FC<{ y: number }> = ({ y }) => (
  <g transform={`translate(0 ${y})`}>
    <path d="M116 122c-3-2-5-3-8-2-14 2-31 14-39 26-8 13-1 27 13 37l57 31 29-61z" fill="url(#tube)" />
    <path d="M116 122c-3-2-5-3-8-2-14 2-31 14-39 26-8 13-1 27 13 37l56 30M116 122l52 30" stroke="#000" strokeWidth="1.300" />
    <ellipse cx="156.500" cy="183" rx="33" ry="22" transform="rotate(-62 156.500 183)" fill="url(#bore)" stroke="#000" strokeWidth="2.500" />
  </g>
);

const PipeModel: React.FC = () => (
  <svg width="190" height="840" viewBox="0 0 190 840" fill="none" role="img" aria-label="PPTE81">
    <defs>
      <linearGradient id="body">
        <stop offset="0" stopColor="#3d3d3d" />
        <stop offset=".12" stopColor="#323232" />
        <stop offset=".22" stopColor="#343434" />
        <stop offset=".6" stopColor="#424242" />
        <stop offset=".85" stopColor="#464646" />
        <stop offset="1" stopColor="#404040" />
      </linearGradient>
      <linearGradient id="tube" gradientUnits="userSpaceOnUse" x1="130" y1="130" x2="100" y2="190">
        <stop offset="0" stopColor="#454545" />
        <stop offset=".25" stopColor="#4e4e4e" />
        <stop offset=".8" stopColor="#323232" />
        <stop offset="1" stopColor="#383838" />
      </linearGradient>
      <linearGradient id="bore" x1="0" y1="0" x2="1" y2="0">
        <stop offset="0" stopColor="#575757" />
        <stop offset="1" stopColor="#363636" />
      </linearGradient>
      <linearGradient id="mouth">
        <stop offset="0" stopColor="#4c4c4c" />
        <stop offset=".7" stopColor="#3a3a3a" />
        <stop offset="1" stopColor="#4a4a4a" />
      </linearGradient>
    </defs>
    <path d="M21.500 85v727c3 25 91 25 94 0V85z" fill="url(#body)" stroke="#000" />
    <path d="M21.500 804c5 26 89 26 94 0M21.500 812c3 25 91 25 94 0" stroke="#000" strokeWidth="1.500" />
    <path d="M19 45v37c2 6 2 4 2 9 6 22 88 22 94 0 0-5 0-3 3-9V45z" fill="url(#body)" />
    <path d="M19 55v25c3 28 96 28 99 0V55M21 86v6c7 22 87 22 94 0v-6" stroke="#000" strokeWidth="1.300" />
    <path d="M14.500 40c2-30 106-30 108 0v13c-4 29-104 29-108 0z" fill="url(#body)" stroke="#000" strokeWidth="1.500" />
    <path d="M14.500 41c2 33 106 33 108 0M16 46c7 28 98 28 105 0" stroke="#000" strokeWidth="1.500" />
    <ellipse cx="68.500" cy="40" rx="49" ry="22" fill="#363636" stroke="#000" strokeWidth="2.500" />
    <ellipse cx="68.500" cy="42.500" rx="47" ry="19.500" fill="#161616" stroke="#000" strokeWidth="2" />
    <ellipse cx="68.500" cy="45" rx="44" ry="15" fill="url(#mouth)" stroke="#000" />
    <path d="M22 40c6-25 87-25 93 0M23 43c8-24 83-24 91 0" stroke="#000" strokeWidth="1.500" />
    <path d="M24 48c12 16 77 16 89 0" stroke="#000" strokeWidth="2" />
    <Branch y={0} />
    <Branch y={248} />
  </svg>
);

const Triad: React.FC = () => (
  <svg width="64" height="56" viewBox="0 0 64 56" fontFamily="Open Sans, sans-serif" fontSize="9" aria-hidden="true">
    <path d="M31 40V16" stroke="#6fd46f" strokeWidth="4" />
    <path d="M31 9l4 10h-8z" fill="#005c00" />
    <path d="M31 40l-14 5" stroke="#0000b0" strokeWidth="4" />
    <path d="M9 48l8-6 2 7z" fill="#0000a0" />
    <path d="M31 40l14 6" stroke="#c80000" strokeWidth="4" />
    <path d="M52 49l-9 0 3-6z" fill="#a80000" />
    <circle cx="31" cy="39" r="2" fill="#003c60" />
    <text x="28" y="8" fill="#128012">Y</text>
    <text x="3" y="51" fill="#2020ff">Z</text>
    <text x="53" y="52" fill="#f02020">X</text>
  </svg>
);

const viewTools = [
  { name: 'Přizpůsobit', art: <><path d="M8 12l-7 7" stroke="#5b9dbf" strokeWidth="3" /><circle cx="12.500" cy="7.500" r="6" fill="#f4f4f4" stroke="#888" strokeWidth="1.500" /><path d="M12.500 3l1.500 2h-3zM12.500 12l1.500-2h-3zM8 7.500L10 6v3zM17 7.500L15 6v3z" fill="#444" /></> },
  { name: 'Zvětšit oblast', art: <><path d="M7 1.500h12v12" stroke="#555" strokeDasharray="2 1.500" /><path d="M7 13l-6 6" stroke="#5b9dbf" strokeWidth="3" /><circle cx="11.500" cy="8.500" r="6" fill="#d8e6ee" stroke="#999" strokeWidth="1.500" /></> },
  { name: 'Předchozí pohled', art: <><path d="M1 15l5-4 7-8 5-2v4l-5 5-6 8z" fill="#e4e4e4" stroke="#888" /><path d="M6 11l3 3M12 4l3 4M3 14l3 2" stroke="#888" /><path d="M19 13.500v3h-4v2.500l-5-4 5-4v2.500z" fill="#4a90b5" /></> },
  { name: 'Řez', art: <><path d="M1 6c0-4 18-4 18 0v11l-6 2v-9c-2-2-4-2-6 0v9l-6-2z" fill="#d4d4d4" stroke="#777" /><path d="M1.500 8H7v11l-5.500-2zM13 8h5.500v9L13 19z" fill="#7fb6d0" stroke="#37718f" /><path d="M2 15l4-5M3 18l4-5M14 15l4-5M14 18l4-5" stroke="#37718f" /></> },
  { name: 'Orientace', menu: true, art: <><path d="M6 1.500h12.500v12L14 18.500M6 1.500l-4 5M18.500 1.500L14 6.500M6 1.500v4M12 2v12M18 8H6" stroke="#777" /><path d="M1.500 6.500h12v12h-12z" fill="#7fb6d0" stroke="#37718f" /></> },
  { name: 'Styl zobrazení', menu: true, art: <><path d="M2 4l6-3 10 2v13l-7 3-9-3z" fill="#dcebf3" stroke="#666" /><path d="M2 4l9 2v13l-9-3z" fill="#7fb6d0" /><path d="M2 4l9 2 7-3M11 6v13" stroke="#555" /></> },
  { name: 'Skrýt/zobrazit', menu: true, art: <><path d="M1 10c4-6 14-6 18 0-4 6-14 6-18 0z" fill="#eee" stroke="#999" /><circle cx="10" cy="10" r="4" fill="#666" /><path d="M10 2v16" stroke="#555" /></> },
  { name: 'Upravit vzhled', art: <>{appearance}<path d="M8 19l1-5 7-6 3 3-7 6z" fill="#f6d773" stroke="#666" /></> },
  { name: 'Použít scénu', menu: true, art: <><path d="M1 12h18v7H1z" fill="#fff" stroke="#666" /><path d="M1 12h3v3H1zM16 12h3v3h-3zM4 15h3v3H4zM10 15h3v3h-3zM13 12h3v3h-3z" fill="#444" /><g transform="translate(1 -1) scale(.9)">{appearance}</g></> },
  { name: 'Nastavení pohledu', menu: true, art: <><path d="M1.500 2.500h17v12h-17z" fill="#d9d9d9" stroke="#666" strokeWidth="1.500" /><path d="M10 15v3M6 18.500h8" stroke="#555" strokeWidth="2" /></> },
];

const taskPane = [
  { name: 'Zdroje', art: home },
  { name: 'Knihovna návrhů', art: <><path d="M2 5l3-3 3.500 1v2L12 2.500 14 4l4-2v13l-6 4-4-1-6-2z" fill="#f0f0f0" /><path d="M2 5l4 1.500v12L2 16.500zM2 5l3-2 4 1M6 6.500L9 4v12l-3 2.500M9 4.500l1 1v12l4-2.500V4l-3-2-2 2M10 5.500L14 4M14 4.500l4-2v12l-4 2.500" stroke={INK} /></> },
  { name: 'Průzkumník', art: <><path d="M1.500 17.500V2.500h6l2 2h7v4" fill="#ddd" stroke={INK} /><path d="M1.500 17.500l4-10h14l-4 10z" fill="#fff" stroke={INK} /></> },
  { name: 'Paleta pohledů', art: <><path d="M1.500 1.500h17v17h-17z" fill="#fff" stroke={INK} /><path d="M3.500 4h8v3h-8zM13.500 4h3v3h-3zM6 9.500h3V13h3v3.500H3.500V13H6z" fill={GOLD} stroke={OCHRE} /><path d="M14 11h4v7h-4z" fill="#999" stroke={INK} /></> },
  { name: 'Vzhledy', art: appearance },
  { name: 'Vlastnosti', art: propertyList },
  { name: 'Fórum', art: <><path d="M8.500 6.500h10v9h-3v3l-3-3h-4z" fill="#f4f4f4" stroke={INK} /><path d="M1.500 2.500h11v9h-5l-3 3.500v-3.500h-3z" fill={BLUE} stroke={NAVY} /></> },
  { name: '3DEXPERIENCE', art: <><path d="M5 4l4-3 5 2v14l-5 2-4-2z" fill={GOLD} stroke={OCHRE} /><path d="M11 12l4 1.500 4-1.500v4l-4 2.500-4-2z" fill={GOLD} stroke={OCHRE} /><path d="M10 4l5-2 4 2v7l-5 2.500-4-2z" fill={BLUE} stroke={NAVY} /><path d="M10 4l4.500 2L19 4M14.500 6v7" stroke={NAVY} /><path d="M1 13l5-4v3h5v3H6v3z" fill="#2d7fa8" stroke={NAVY} strokeWidth=".7" /></> },
];

const Viewport: React.FC = () => (
  <main className="relative min-w-0 flex-1 bg-white">
    <div className="absolute left-[341px] top-px"><PipeModel /></div>
    <div className="absolute bottom-[42px] left-[9px]"><Triad /></div>
    <div className="absolute -top-[17px] left-1/2 flex h-5 -translate-x-1/2 items-center pr-1">
      {viewTools.map((t) => (
        <React.Fragment key={t.name}>
          <button aria-label={t.name} className="flex w-[26px] justify-center"><Icon>{t.art}</Icon></button>
          {t.menu && <button aria-label={`${t.name} – nabídka`} className="flex w-[14px] justify-center"><Caret dim /></button>}
        </React.Fragment>
      ))}
    </div>
    <div className="absolute -top-[17px] right-[6px] flex h-5 items-center">
      {[
        { name: 'Dlaždice vlevo', d: 'M4.500 3.500h11v13h-11zM7.500 3.500v13M13 7l-4 3 4 3z' },
        { name: 'Dlaždice vpravo', d: 'M4.500 3.500h11v13h-11zM12.500 3.500v13M7 7l4 3-4 3z' },
        { name: 'Minimalizovat dokument', d: 'M5 16h10' },
        { name: 'Obnovit dokument', d: 'M2.500 8.500h10v8h-10zM7.500 8.500v-5h10v8h-5' },
        { name: 'Zavřít dokument', d: 'M5 5l10 10M15 5L5 15' },
      ].map((b) => (
        <button key={b.name} aria-label={b.name} className="flex w-[26px] justify-center">
          <Icon><path d={b.d} stroke="#a0a0a0" strokeWidth="1.400" /></Icon>
        </button>
      ))}
    </div>
    <div className="absolute right-0 top-[53px] flex w-[25px] flex-col border-l border-t border-[#808080]">
      {taskPane.map((t, i) => (
        <button key={t.name} aria-label={t.name} className={`flex h-6 items-center justify-center border-b border-[#808080] ${i === 0 ? 'bg-[#f7f7f7]' : 'bg-[#d4d4d4]'}`}>
          <Icon>{t.art}</Icon>
        </button>
      ))}
    </div>
  </main>
);

/* ---------- bottom bars ---------- */

const StatusBar: React.FC = () => (
  <footer className="flex h-[22px] shrink-0 items-center whitespace-nowrap border-t border-[#808080] pl-px">
    <span className="flex-1">SOLIDWORKS Design Professional 2026 SP3.2</span>
    <span className="w-20">Plně určená</span>
    <span className="w-[205px]">Úprava Sestava</span>
    <div className="flex h-full w-[197px] items-center border-x border-[#d0d0d0] pl-[6px]">
      <Icon size={16}>
        <circle cx="10" cy="9" r="2.500" fill="#111" />
        <path d="M5 12h10l2 3v3H3v-3z" fill="#111" />
        <path d="M1 9h4M15 9h4M3 3l3 2.500M17 3l-3 2.500M10 1v3M8 15h4" stroke="#111" strokeWidth="2" />
        <path d="M8 15h4" stroke="#f7f7f7" strokeWidth="1.500" />
      </Icon>
      <span className="w-[106px] pl-[5px]">Asistent výkonu:</span>
      <span className="w-6">
        <Icon size={16}><path d="M2 12V4c0-3 5-3 5 0v9M4.500 12V5M8 12V4c0-3 9-3 9 0v11c0 4-5 4-5 0V6M14.500 15V6" stroke="#444" strokeWidth="1.400" /></Icon>
      </span>
      <span className="w-6">
        <Icon size={16}><rect x="5" y="1" width="10" height="18" rx="5" fill="#eee" stroke="#444" strokeWidth="1.500" /><circle cx="10" cy="6" r="2" stroke="#444" /><circle cx="10" cy="14" r="2" stroke="#444" /></Icon>
      </span>
      <Icon size={16}><circle cx="10" cy="10" r="8.500" fill="#ddd" stroke="#444" strokeWidth="1.300" /><path d="M10 2v16M2 10h16M6 3v14M14 3v14M3 6h14M3 14h14" stroke="#777" /></Icon>
    </div>
    <button className="ml-[21px] flex w-[82px] items-center gap-4">Vlastní <Caret up /></button>
    <button aria-label="Značky" className="w-6">
      <Icon size={18}><path d="M1 6l8-4 10 7-7 8-5-1zM5 5l9 7M3 8l8 1" fill="#ddd" stroke="#444" strokeWidth="1.300" /></Icon>
    </button>
    <button aria-label="Poznámky" className="mr-1">
      <Icon size={16}><path d="M2 2h14l2 2v14H2zM5 11h10M5 14.500h10M5 7h4" stroke="#444" strokeWidth="1.500" /></Icon>
    </button>
  </footer>
);

const App: React.FC = () => (
  <div className="flex h-screen min-w-[1680px] flex-col overflow-hidden bg-[#f7f7f7] font-['Open_Sans',sans-serif] text-[11px] leading-4 text-black">
    <TitleBar />
    <Ribbon />
    <CommandTabs />
    <div className="flex min-h-0 flex-1">
      <div className="flex shrink-0 items-start">
        <FeatureColumn items={sheetMetal} className="w-[49px] border-b border-r pb-[7px]" />
        <FeatureColumn items={surfaces} className="w-[47px] border-b pb-[6px]" />
      </div>
      <FeatureManager />
      <Viewport />
    </div>
    <div className="flex h-4 shrink-0 pl-24 leading-[14px]">
      <span className="w-7 border-l-2 border-r border-l-[#9bb5b8] border-r-[#808080]" />
      <button className="w-14 text-xs font-bold leading-[14px]">Model</button>
      <button className="w-[125px] border-x border-t border-[#808080] bg-[#d4d4d4] pr-2 text-[#222]">Pohybová studie 1</button>
      <span className="flex-1 border-t border-[#808080]" />
    </div>
    <StatusBar />
  </div>
);

export default App;
